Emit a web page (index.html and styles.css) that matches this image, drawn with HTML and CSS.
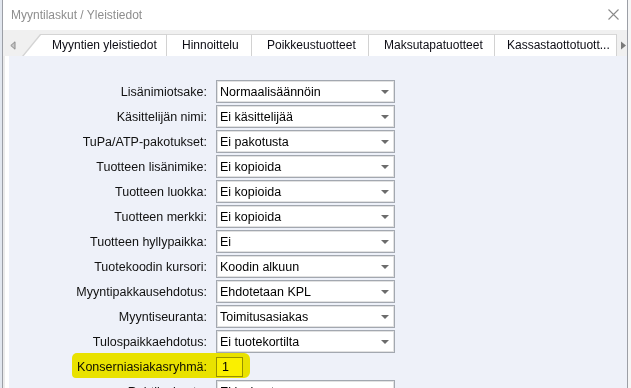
FILE: index.html
```html
<!DOCTYPE html>
<html lang="fi">
  <head>
    <meta charset="UTF-8" />
    <title>Myyntilaskut / Yleistiedot</title>
    <link rel="stylesheet" href="styles.css">
  </head>
  <body>
    <div class="screen">
      <div class="desk-left"></div>
      <div class="window">
        <div class="titlebar">
          <span class="title">Myyntilaskut / Yleistiedot</span>
          <svg class="close" width="11" height="11" viewBox="0 0 11 11">
            <path d="M0.5 0.5 L10.5 10.5 M10.5 0.5 L0.5 10.5" stroke="#8a8a8a" stroke-width="1.1" fill="none"/>
          </svg>
        </div>

        <div class="tabstrip">
          <span class="tab-scroll scroll-left">
            <svg width="6" height="9" viewBox="0 0 6 9">
              <path d="M5 0.8 L0.8 4.5 L5 8.2 Z" fill="#c8c8c8" stroke="#8c8c8c" stroke-width="1"/>
            </svg>
          </span>
          <div class="tab active tab-1">Myyntien yleistiedot</div>
          <div class="tab tab-2">Hinnoittelu</div>
          <div class="tab tab-3">Poikkeustuotteet</div>
          <div class="tab tab-4">Maksutapatuotteet</div>
          <div class="tab tab-5">Kassastaottotuott...</div>
          <span class="tab-scroll scroll-right">
            <svg width="5" height="9" viewBox="0 0 5 9">
              <path d="M0 0.5 L5 4.5 L0 8.5 Z" fill="#7a7a7a"/>
            </svg>
          </span>
        </div>

        <div class="panel">
          <div class="panel-edge"></div>
          <div class="content">
            <div class="row">
              <span class="label">Lisänimiotsake:</span>
              <div class="combo"><span>Normaalisäännöin</span><i class="caret"></i></div>
            </div>
            <div class="row">
              <span class="label">Käsittelijän nimi:</span>
              <div class="combo"><span>Ei käsittelijää</span><i class="caret"></i></div>
            </div>
            <div class="row">
              <span class="label">TuPa/ATP-pakotukset:</span>
              <div class="combo"><span>Ei pakotusta</span><i class="caret"></i></div>
            </div>
            <div class="row">
              <span class="label">Tuotteen lisänimike:</span>
              <div class="combo"><span>Ei kopioida</span><i class="caret"></i></div>
            </div>
            <div class="row">
              <span class="label">Tuotteen luokka:</span>
              <div class="combo"><span>Ei kopioida</span><i class="caret"></i></div>
            </div>
            <div class="row">
              <span class="label">Tuotteen merkki:</span>
              <div class="combo"><span>Ei kopioida</span><i class="caret"></i></div>
            </div>
            <div class="row">
              <span class="label">Tuotteen hyllypaikka:</span>
              <div class="combo"><span>Ei</span><i class="caret"></i></div>
            </div>
            <div class="row">
              <span class="label">Tuotekoodin kursori:</span>
              <div class="combo"><span>Koodin alkuun</span><i class="caret"></i></div>
            </div>
            <div class="row">
              <span class="label">Myyntipakkausehdotus:</span>
              <div class="combo"><span>Ehdotetaan KPL</span><i class="caret"></i></div>
            </div>
            <div class="row">
              <span class="label">Myyntiseuranta:</span>
              <div class="combo"><span>Toimitusasiakas</span><i class="caret"></i></div>
            </div>
            <div class="row">
              <span class="label">Tulospaikkaehdotus:</span>
              <div class="combo"><span>Ei tuotekortilta</span><i class="caret"></i></div>
            </div>
            <div class="row marked">
              <span class="label">Konserniasiakasryhmä:</span>
              <div class="field">1</div>
            </div>
            <div class="row">
              <span class="label">Rahtilaskenta:</span>
              <div class="combo"><span>Ei laskentaa</span><i class="caret"></i></div>
            </div>
          </div>
        </div>
      </div>
      <div class="desk-right"></div>
    </div>
  </body>
</html>
```

FILE: styles.css
```css
* {
  box-sizing: border-box;
  margin: 0;
  padding: 0;
}

body {
  font-family: "Liberation Sans", Arial, sans-serif;
  background: #f4f4f4;
  color: #111;
}

.screen {
  display: flex;
  width: 631px;
  height: 388px;
  overflow: hidden;
}

.desk-left {
  width: 2px;
  background: #e2e7ef;
}

.desk-right {
  flex: 1;
  background: #f6f6f6;
}

.window {
  width: 626px;
  display: flex;
  flex-direction: column;
  border-left: 1px solid #9c9fa6;
  border-right: 1px solid #9c9fa6;
}

/* title bar */
.titlebar {
  height: 30px;
  flex-shrink: 0;
  display: flex;
  align-items: center;
  padding-left: 8px;
  background: #fff;
}

.title {
  font-size: 12px;
  color: #8e8e8e;
}

.close {
  margin-left: auto;
  margin-right: 8px;
  margin-top: -1px;
}

/* tabs */
.tabstrip {
  height: 26px;
  flex-shrink: 0;
  display: flex;
  align-items: flex-end;
  background: #f0f0f0;
}

.tab-scroll {
  height: 22px;
  display: flex;
  align-items: center;
}

.scroll-left {
  width: 19px;
  padding-left: 7px;
  padding-top: 1px;
}

.scroll-right {
  width: 10px;
  padding-left: 4px;
  padding-top: 1px;
}

.tab {
  height: 22px;
  font-size: 12px;
  line-height: 21px;
  white-space: nowrap;
  overflow: hidden;
  color: #0c0c14;
  background: #fff;
  border-top: 1px solid #d8d8d8;
  border-right: 1px solid #d2d2d2;
}

.tab-1 { width: 145px; padding-left: 30px; }
.tab-2 { width: 85px; padding-left: 15px; }
.tab-3 { width: 117px; padding-left: 15px; }
.tab-4 { width: 126px; padding-left: 15px; }
.tab-5 { width: 122px; padding-left: 12px; }

.tab.active {
  position: relative;
  z-index: 0;
  background: transparent;
  border-top: none;
  padding-top: 1px;
}

.tab.active::before,
.tab.active::after {
  content: "";
  position: absolute;
  z-index: -1;
  clip-path: polygon(0 100%, 18px 0, 100% 0, 100% 100%);
}

.tab.active::before {
  inset: 0;
  background: #d4d4d4;
}

.tab.active::after {
  inset: 1px 0 -1px 1px;
  background: #fff;
}

/* panel */
.panel {
  flex: 1;
  display: flex;
  min-height: 0;
}

.panel-edge {
  width: 6px;
  background: linear-gradient(to right, #ebebeb 2px, #fff 2px);
}

.content {
  flex: 1;
  background: #eef1f9;
  padding-top: 24px;
}

.row {
  display: flex;
  align-items: center;
  height: 23px;
  margin-bottom: 2px;
  font-size: 12.5px;
}

.label {
  width: 198px;
  margin-right: 9px;
  text-align: right;
  white-space: nowrap;
}

.combo {
  width: 179px;
  height: 23px;
  display: flex;
  align-items: center;
  padding: 0 5px 0 3px;
  background: #fff;
  border: 1px solid #a3a8b0;
  box-shadow: inset 0 0 0 1px #e2e2e2;
  color: #000;
}

.caret {
  margin-left: auto;
  width: 0;
  height: 0;
  border-left: 4px solid transparent;
  border-right: 4px solid transparent;
  border-top: 4px solid #6c6c6c;
  margin-top: 1px;
}

.field {
  width: 27px;
  height: 20px;
  line-height: 18px;
  padding-left: 5px;
  border: 1px solid #9a9a9a;
  background: #fff;
  color: #000;
}

/* highlighter stroke over the group row */
.row.marked {
  position: relative;
}

.row.marked::after {
  content: "";
  position: absolute;
  left: 63px;
  width: 178px;
  top: -2px;
  height: 25px;
  background: #faf000;
  border-radius: 5px 6px 6px 4px;
  mix-blend-mode: multiply;
}
```
